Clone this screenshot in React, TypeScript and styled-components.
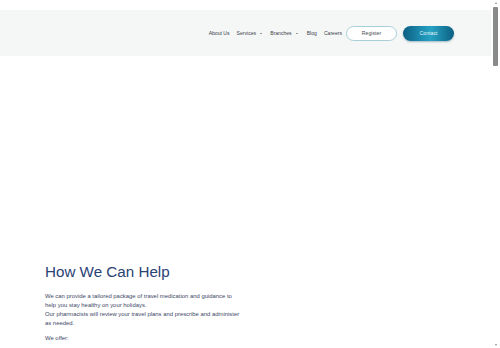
import React from "react";
import styled, { createGlobalStyle } from "styled-components";

const Global = createGlobalStyle`
  html, body { margin: 0; padding: 0; background: #ffffff; }
  body { font-family: "Liberation Sans", Arial, sans-serif; }
`;

const Page = styled.div`
  padding-top: 10px;
  padding-right: 8px;
`;

const Header = styled.header`
  height: 46px;
  background: #f5f7f7;
  display: flex;
  align-items: center;
  justify-content: flex-end;
  padding: 0 38px 0 45px;
`;

const Nav = styled.nav`
  display: flex;
  align-items: center;
`;

const NavLink = styled.a<{ $gap?: number }>`
  font-size: 5.1px;
  color: #3a3f4a;
  text-decoration: none;
  margin-right: ${(p) => p.$gap ?? 7}px;
  display: flex;
  align-items: center;
  white-space: nowrap;
`;

const Caret = styled.span`
  display: inline-block;
  width: 0;
  height: 0;
  margin-left: 4px;
  border-left: 1.3px solid transparent;
  border-right: 1.3px solid transparent;
  border-top: 1.6px solid #3a3f4a;
`;

const Pill = styled.button<{ $primary?: boolean }>`
  font-family: inherit;
  font-size: 5.2px;
  width: 51px;
  height: 15px;
  border-radius: 8px;
  cursor: pointer;
  padding: 0;
  color: ${(p) => (p.$primary ? "#e6f6fb" : "#4a4f58")};
  border: ${(p) => (p.$primary ? "none" : "1px solid #a9cfd6")};
  background: ${(p) =>
    p.$primary
      ? "linear-gradient(90deg, #0c5f82 0%, #2198bb 45%, #27a2c3 55%, #0c5f82 100%)"
      : "#ffffff"};
  box-shadow: ${(p) => (p.$primary ? "0 1px 2px rgba(10,70,100,0.35)" : "none")};
  margin-left: ${(p) => (p.$primary ? "6px" : "0")};
`;

const Hero = styled.section`
  height: 207px;
`;

const Content = styled.section`
  padding: 0 45px;
`;

const Title = styled.h2`
  margin: 0 0 11px;
  font-weight: 400;
  font-size: 15.2px;
  line-height: 18px;
  color: #2b4274;
`;

const Text = styled.p`
  margin: 0 0 6px;
  max-width: 198px;
  font-size: 5.9px;
  line-height: 9px;
  color: #3d4766;
`;

const Scrollbar = styled.div`
  position: fixed;
  top: 0;
  right: 0;
  width: 9px;
  height: 100vh;
  background: #ffffff;
  display: flex;
  flex-direction: column;
  align-items: center;
`;

const Arrow = styled.span<{ $down?: boolean }>`
  width: 0;
  height: 0;
  margin: ${(p) => (p.$down ? "auto 0 2px" : "2px 0 0")};
  border-left: 1.5px solid transparent;
  border-right: 1.5px solid transparent;
  ${(p) =>
    p.$down ? "border-top: 2px solid #8c8c8c;" : "border-bottom: 2px solid #8c8c8c;"}
`;

const Thumb = styled.div`
  margin-top: 3px;
  width: 5px;
  height: 59px;
  border-radius: 1px;
  background: #8a8a8a;
`;

export default function App() {
  return (
    <>
      <Global />
      <Page>
        <Header>
          <Nav>
            <NavLink href="#">About Us</NavLink>
            <NavLink href="#" $gap={8}>
              Services<Caret />
            </NavLink>
            <NavLink href="#" $gap={9}>
              Branches<Caret />
            </NavLink>
            <NavLink href="#">Blog</NavLink>
            <NavLink href="#" $gap={4}>Careers</NavLink>
            <Pill>Register</Pill>
            <Pill $primary>Contact</Pill>
          </Nav>
        </Header>
        <Hero />
        <Content>
          <Title>How We Can Help</Title>
          <Text>
            We can provide a tailored package of travel medication and guidance to help you stay healthy on your holidays.
            <br />
            Our pharmacists will review your travel plans and prescribe and administer as needed.
          </Text>
          <Text>We offer:</Text>
        </Content>
      </Page>
      <Scrollbar>
        <Arrow />
        <Thumb />
        <Arrow $down />
      </Scrollbar>
    </>
  );
}
